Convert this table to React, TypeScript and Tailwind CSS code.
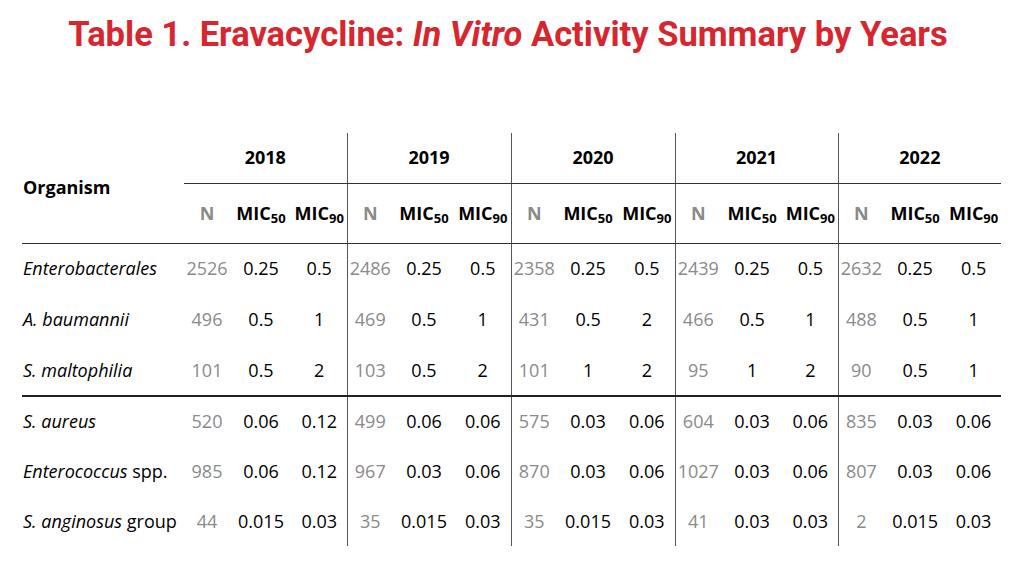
import React from "react";

type G = [string, string, string];
type Row = { name: React.ReactNode; groups: G[]; h: string; thick?: boolean };

const rows: Row[] = [
  {
    name: <i>Enterobacterales</i>,
    groups: [["2526", "0.25", "0.5"], ["2486", "0.25", "0.5"], ["2358", "0.25", "0.5"], ["2439", "0.25", "0.5"], ["2632", "0.25", "0.5"]],
    h: "h-[51px]",
  },
  {
    name: <i>A. baumannii</i>,
    groups: [["496", "0.5", "1"], ["469", "0.5", "1"], ["431", "0.5", "2"], ["466", "0.5", "1"], ["488", "0.5", "1"]],
    h: "h-[51px]",
  },
  {
    name: <i>S. maltophilia</i>,
    groups: [["101", "0.5", "2"], ["103", "0.5", "2"], ["101", "1", "2"], ["95", "1", "2"], ["90", "0.5", "1"]],
    h: "h-[51px]",
    thick: true,
  },
  {
    name: <i>S. aureus</i>,
    groups: [["520", "0.06", "0.12"], ["499", "0.06", "0.06"], ["575", "0.03", "0.06"], ["604", "0.03", "0.06"], ["835", "0.03", "0.06"]],
    h: "h-[50px]",
  },
  {
    name: (
      <>
        <i>Enterococcus</i> spp.
      </>
    ),
    groups: [["985", "0.06", "0.12"], ["967", "0.03", "0.06"], ["870", "0.03", "0.06"], ["1027", "0.03", "0.06"], ["807", "0.03", "0.06"]],
    h: "h-[50px]",
  },
  {
    name: (
      <>
        <i>S. anginosus</i> group
      </>
    ),
    groups: [["44", "0.015", "0.03"], ["35", "0.015", "0.03"], ["35", "0.015", "0.03"], ["41", "0.03", "0.03"], ["2", "0.015", "0.03"]],
    h: "h-[50px]",
  },
];

const years = ["2018", "2019", "2020", "2021", "2022"];

function Mic({ n }: { n: string }) {
  return (
    <span className="whitespace-nowrap">
      MIC<span className="relative top-[3px] text-[13px]">{n}</span>
    </span>
  );
}

export default function App() {
  return (
    <div className="w-[1016px] h-[562px] bg-white overflow-hidden flex flex-col">
      <div className="pt-[14px] h-[54px] flex justify-center">
        <div
          className="text-[34.5px] leading-[40px] font-bold text-[#d8262f] whitespace-nowrap"
          style={{ fontFamily: "Roboto, 'Liberation Sans', sans-serif" }}
        >
          Table 1. Eravacycline: <i>In Vitro</i> Activity Summary by Years
        </div>
      </div>
      <table
        className="mt-[79px] ml-[22px] w-[979px] table-fixed border-collapse text-[18px] text-black"
        style={{ fontFamily: "'Open Sans', 'Liberation Sans', sans-serif" }}
      >
        <colgroup>
          <col className="w-[162px]" />
          {years.map((y, i) => (
            <React.Fragment key={y}>
              <col className="w-[46px]" />
              <col className="w-[62px]" />
              <col className={i === 1 || i === 2 ? "w-[56px]" : "w-[55px]"} />
            </React.Fragment>
          ))}
        </colgroup>
        <thead>
          <tr className="h-[50px]">
            <th
              rowSpan={2}
              className="text-left font-bold pl-[1px] border-b border-[#333] align-middle"
            >
              Organism
            </th>
            {years.map((y, i) => (
              <th
                key={y}
                colSpan={3}
                className={`font-bold text-center border-b border-[#333] ${i > 0 ? "border-l border-l-[#555]" : ""}`}
              >
                {y}
              </th>
            ))}
          </tr>
          <tr className="h-[60px]">
            {years.map((y, i) => (
              <React.Fragment key={y}>
                <th className={`font-bold text-center text-[#8a8a8a] border-b border-[#333] ${i > 0 ? "border-l border-l-[#555]" : ""}`}>
                  N
                </th>
                <th className="font-bold text-center border-b border-[#333]">
                  <Mic n="50" />
                </th>
                <th className="font-bold text-center border-b border-[#333]">
                  <Mic n="90" />
                </th>
              </React.Fragment>
            ))}
          </tr>
        </thead>
        <tbody>
          {rows.map((r, ri) => (
            <tr
              key={ri}
              className={`${r.h} ${r.thick ? "border-b-2 border-[#222]" : ""}`}
            >
              <td className="pl-[1px] whitespace-nowrap">{r.name}</td>
              {r.groups.map((g, gi) => (
                <React.Fragment key={gi}>
                  <td className={`text-center text-[#8a8a8a] ${gi > 0 ? "border-l border-l-[#555]" : ""}`}>
                    {g[0]}
                  </td>
                  <td className="text-center">{g[1]}</td>
                  <td className="text-center">{g[2]}</td>
                </React.Fragment>
              ))}
            </tr>
          ))}
        </tbody>
      </table>
    </div>
  );
}
